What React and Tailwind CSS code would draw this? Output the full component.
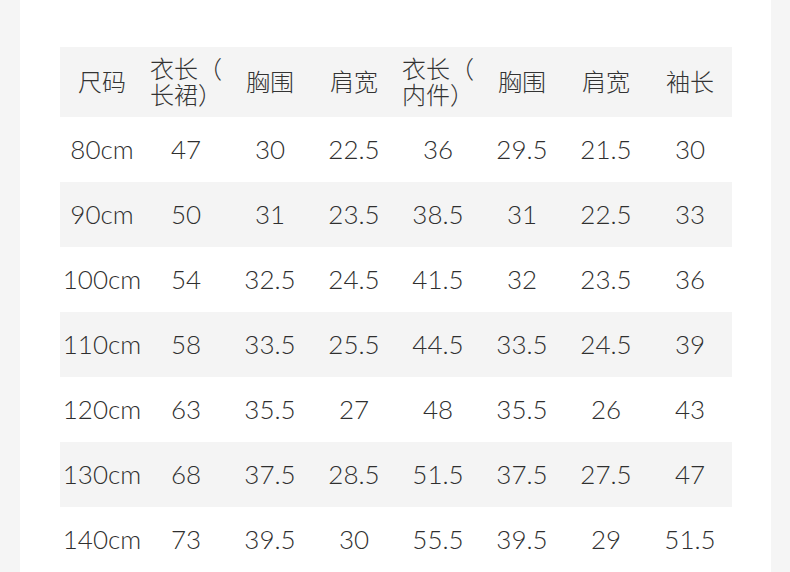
import React from "react";

const header = ["尺码", "衣长（\n长裙）", "胸围", "肩宽", "衣长（\n内件）", "胸围", "肩宽", "袖长"];
const rows = [
  ["80cm", "47", "30", "22.5", "36", "29.5", "21.5", "30"],
  ["90cm", "50", "31", "23.5", "38.5", "31", "22.5", "33"],
  ["100cm", "54", "32.5", "24.5", "41.5", "32", "23.5", "36"],
  ["110cm", "58", "33.5", "25.5", "44.5", "33.5", "24.5", "39"],
  ["120cm", "63", "35.5", "27", "48", "35.5", "26", "43"],
  ["130cm", "68", "37.5", "28.5", "51.5", "37.5", "27.5", "47"],
  ["140cm", "73", "39.5", "30", "55.5", "39.5", "29", "51.5"],
];

export default function App() {
  return (
    <div className="w-[790px] h-[572px] bg-[#f5f5f5] overflow-hidden flex">
      <div className="ml-[20px] w-[751px] h-full bg-white pt-[47px] pl-[40px]">
        <div className="w-[672px] text-[#333333]">
          <div className="grid grid-cols-[repeat(8,84px)] h-[70px] bg-[#f4f4f4] items-center">
            {header.map((h, i) => (
              <div
                key={i}
                className="text-center text-[24px] leading-[26px] font-light font-['Noto_Sans_CJK_SC',sans-serif] whitespace-pre-line pb-[3px]"
              >
                {h}
              </div>
            ))}
          </div>
          {rows.map((r, ri) => (
            <div
              key={ri}
              className={`grid grid-cols-[repeat(8,84px)] h-[65px] items-center ${ri % 2 === 1 ? "bg-[#f4f4f4]" : "bg-white"}`}
            >
              {r.map((c, ci) => (
                <div
                  key={ci}
                  className="text-center text-[26px] leading-[30px] font-light font-['Lato',sans-serif] text-[#2f2f2f] pb-[2px]"
                >
                  {c}
                </div>
              ))}
            </div>
          ))}
        </div>
      </div>
    </div>
  );
}
